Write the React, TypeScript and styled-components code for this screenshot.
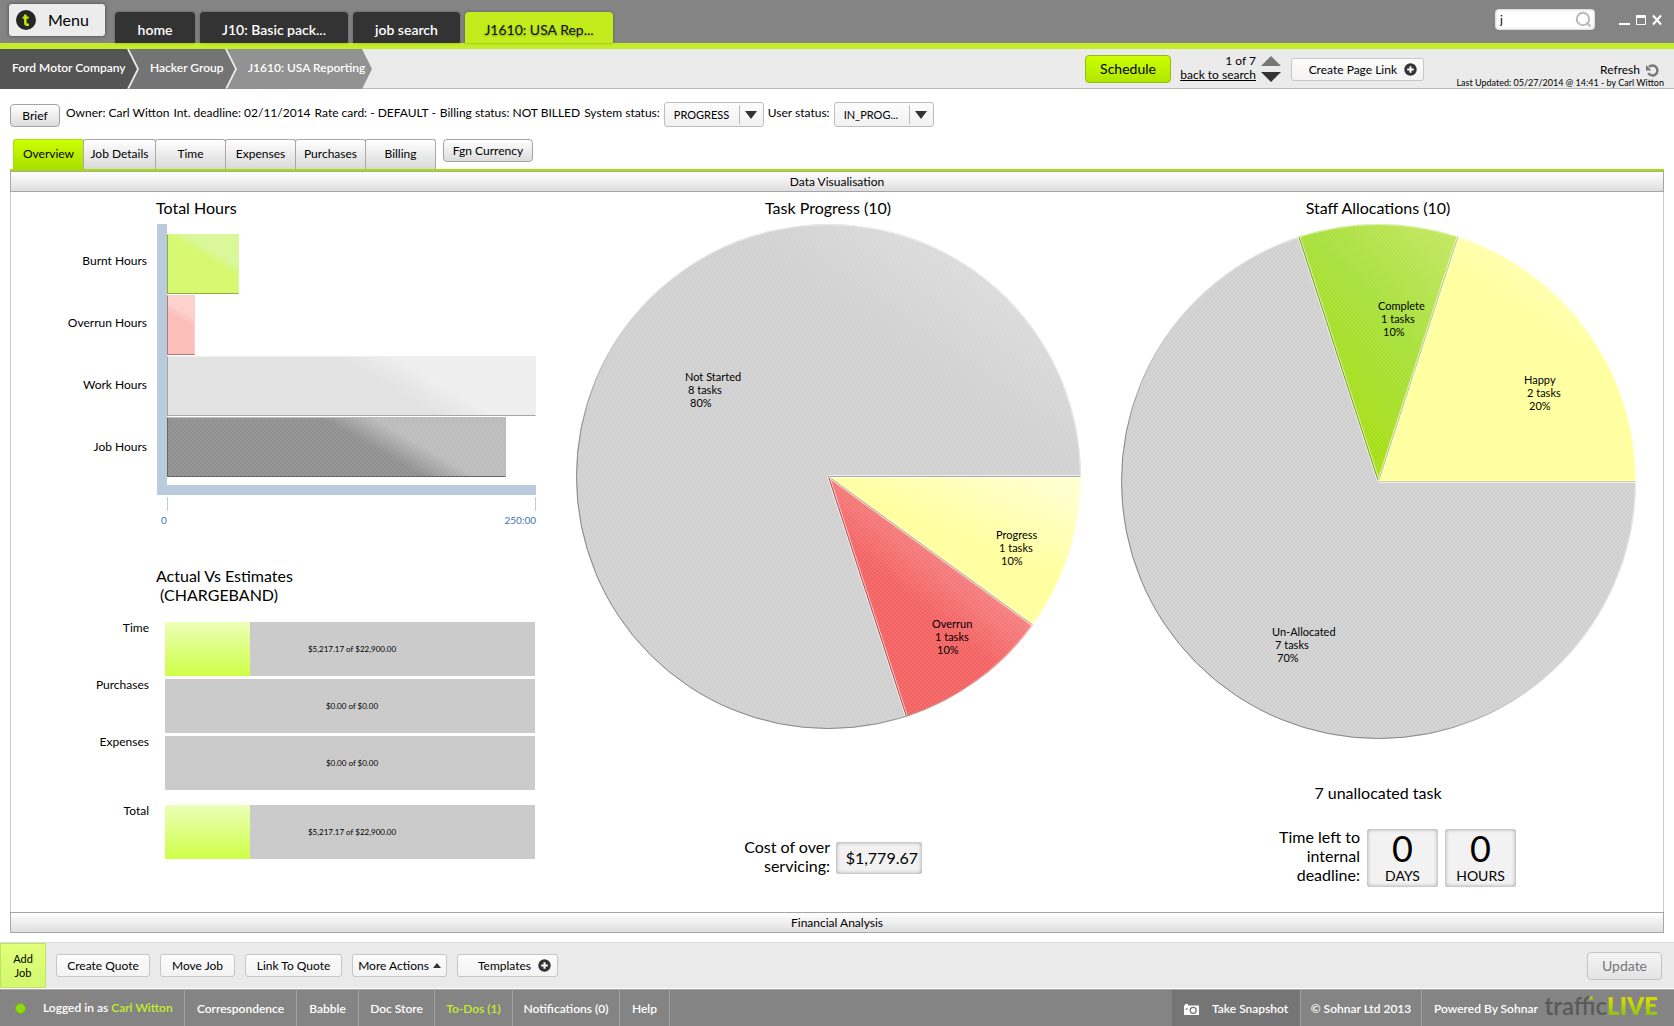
import React from 'react';
import styled, { createGlobalStyle, css } from 'styled-components';

const lime = '#c4ee28';

const GlobalStyle = createGlobalStyle`
  *, *::before, *::after { box-sizing: border-box; }
  body { margin: 0; background: #fff; color: #000; font: 12px/16px Lato, "Open Sans", sans-serif; }
  button, input, select { font: inherit; color: inherit; margin: 0; }
  button { cursor: pointer; white-space: nowrap; }
  button:disabled { cursor: default; }
  a { color: inherit; text-decoration: none; }
  h2, p, dl, dd, ul { margin: 0; padding: 0; font-weight: 400; }
  svg { display: block; }
`;

const Page = styled.div`
  min-height: 100vh;
  display: flex;
  flex-direction: column;
`;

/* ---------- top bar ---------- */

const TopBar = styled.header`
  display: flex;
  height: 49px;
  padding: 0 12px 0 9px;
  background: #848484;
  border-bottom: 6px solid ${lime};
`;

const MenuButton = styled.button`
  display: flex;
  align-items: center;
  gap: 12px;
  width: 96px;
  height: 32px;
  margin-top: 4px;
  padding: 0 7px;
  border: 0;
  border-radius: 3px;
  background: #ececec;
  box-shadow: 0 0 4px rgba(0, 0, 0, 0.45);
  font-size: 16px;
`;

const WindowTabs = styled.nav`
  display: flex;
  align-items: flex-end;
  gap: 5px;
  margin-left: 10px;
`;

const WindowTab = styled.button<{ $width: number; $active?: boolean }>`
  width: ${(p) => p.$width}px;
  height: 31px;
  padding: 4px 0 0;
  border: 0;
  border-radius: 4px 4px 0 0;
  background: ${(p) => (p.$active ? '#c2ec1c' : '#333')};
  color: ${(p) => (p.$active ? '#111' : '#fff')};
  font-size: 14px;
  font-weight: ${(p) => (p.$active ? 400 : 600)};
  text-shadow: ${(p) => (p.$active ? '0 1px 2px rgba(0,0,0,.3)' : 'none')};
  box-shadow: 0 0 3px rgba(0, 0, 0, 0.3);
`;

const SearchBox = styled.label`
  display: flex;
  align-items: center;
  width: 100px;
  height: 21px;
  margin: 9px 0 0 auto;
  padding: 0 3px 0 5px;
  border-radius: 4px;
  background: #fff;
  box-shadow: inset 0 0 3px rgba(0, 0, 0, 0.35);
`;

const SearchInput = styled.input`
  flex: 1;
  min-width: 0;
  padding: 0;
  border: 0;
  outline: 0;
  background: none;
`;

const WindowControls = styled.div`
  display: flex;
  gap: 6px;
  margin: 12px 0 0 24px;
  height: 14px;
`;

const IconButton = styled.button`
  padding: 0;
  border: 0;
  background: none;
`;

/* ---------- breadcrumb bar ---------- */

const CrumbBar = styled.div`
  display: flex;
  height: 40px;
  background: #ebebeb;
  border-bottom: 1px solid #b8b8b8;
`;

const Crumbs = styled.nav`
  display: flex;
  height: 40px;
`;

const Crumb = styled.a<{ $width: number; $tone: string; $first?: boolean }>`
  width: ${(p) => p.$width}px;
  padding-left: ${(p) => (p.$first ? 12 : 21)}px;
  margin-left: ${(p) => (p.$first ? 0 : -8)}px;
  background: ${(p) => p.$tone};
  color: #fff;
  font-weight: 600;
  line-height: 38px;
  white-space: nowrap;
  clip-path: polygon(
    0 0, calc(100% - 10px) 0, 100% 50%, calc(100% - 10px) 100%, 0 100%,
    ${(p) => (p.$first ? '0 50%' : '10px 50%')}
  );
`;

const CrumbTools = styled.div`
  display: flex;
  flex: 1;
  align-items: flex-start;
  justify-content: flex-end;
  padding-right: 10px;
`;

const ScheduleButton = styled.button`
  width: 86px;
  height: 28px;
  margin: 6px 1px 0 0;
  padding: 0;
  border: 1px solid #93bd10;
  border-radius: 4px;
  background: linear-gradient(#ccff00, #b0e600);
  font-size: 14px;
`;

const Pager = styled.div`
  width: 84px;
  margin-top: 5px;
  text-align: right;
  line-height: 14px;
  a { text-decoration: underline; }
`;

const PagerArrows = styled.div`
  display: flex;
  flex-direction: column;
  gap: 6px;
  margin: 7px 10px 0 5px;
`;

const RefreshArea = styled.div`
  width: 240px;
  margin-top: 13px;
  text-align: right;
`;

const RefreshButton = styled.button`
  display: inline-flex;
  align-items: center;
  gap: 6px;
  height: 16px;
  margin-right: 5px;
  padding: 0;
  border: 0;
  background: none;
`;

const Updated = styled.p`
  font-size: 9px;
  line-height: 10px;
`;

/* ---------- shared buttons ---------- */

const SoftButton = styled.button<{ $width: number }>`
  display: flex;
  align-items: center;
  justify-content: center;
  gap: 4px;
  width: ${(p) => p.$width}px;
  height: 23px;
  padding: 0;
  border: 1px solid #c6c6c6;
  border-radius: 3px;
  background: linear-gradient(#fcfcfc, #f3f3f3);
`;

const TemplateButton = styled(SoftButton)`
  justify-content: flex-end;
  gap: 7px;
  padding-right: 6px;
`;

const LinkButton = styled(TemplateButton)`
  margin-top: 9px;
`;

const GreyButton = styled.button<{ $width: number }>`
  width: ${(p) => p.$width}px;
  height: 23px;
  padding: 0;
  border: 1px solid #a2a2a2;
  border-radius: 4px;
  background: linear-gradient(#fff, #dcdcdc);
  line-height: 20px;
`;

/* ---------- job details ---------- */

const JobBar = styled.section`
  display: flex;
  align-items: flex-start;
  gap: 4px;
  padding: 12px 10px;
`;

const BriefSlot = styled.div`
  padding: 3px 2px 0 0;
`;

const Facts = styled.dl`
  display: flex;
  gap: 4px;
  line-height: 24px;
  white-space: nowrap;
`;

const Fact = styled.div`
  display: flex;
  gap: 3px;
`;

const StatusField = styled.label`
  display: flex;
  gap: 4px;
  line-height: 24px;
  white-space: nowrap;
`;

const SelectFrame = styled.span`
  position: relative;
  display: block;
  width: 100px;
  height: 25px;
  margin-top: 1px;
`;

const Select = styled.select`
  width: 100%;
  height: 100%;
  padding: 0 26px 0 9px;
  appearance: none;
  border: 1px solid #bdbdbd;
  border-radius: 3px;
  background: linear-gradient(#fcfcfc, #f1f1f1);
  font-size: 11px;
`;

const SelectArrow = styled.span`
  position: absolute;
  inset: 3px 1px 3px auto;
  width: 24px;
  display: grid;
  place-items: center;
  border-left: 1px solid #bdbdbd;
  pointer-events: none;
`;

const TabRow = styled.nav`
  display: flex;
  align-items: flex-start;
  margin: 0 10px;
  padding-left: 3px;
  border-bottom: 2px solid #a9df00;
`;

const JobTab = styled.button<{ $active?: boolean; $wide?: boolean }>`
  width: ${(p) => (p.$wide ? 73 : 71)}px;
  height: 30px;
  margin-right: -1px;
  padding: 0 0 2px;
  border: 1px solid #a9a9a9;
  border-bottom: 0;
  border-radius: 3px 3px 0 0;
  background: linear-gradient(#fff, #d9d9d9);
  ${(p) =>
    p.$active &&
    css`
      border-color: #a9df00;
      background: linear-gradient(#ccff00, #a9df00);
    `}
`;

const CurrencySlot = styled.div`
  margin-left: 8px;
`;

/* ---------- panel ---------- */

const Panel = styled.main`
  flex: 1;
  display: flex;
  flex-direction: column;
  margin: 0 10px 9px;
`;

const PanelBar = styled.button`
  height: 21px;
  padding: 0;
  border: 1px solid #a6a6a6;
  background: linear-gradient(#fff, #dedede);
`;

const PanelBody = styled.div`
  flex: 1;
  display: grid;
  grid-template-columns: 542fr 550fr 550fr;
  padding: 0 10px 20px 0;
  border: solid #ccc;
  border-width: 0 1px;
`;

const LeftColumn = styled.div`
  padding-right: 17px;
`;

const ChartColumn = styled.section`
  display: flex;
  flex-direction: column;
  align-items: center;
`;

const ChartTitle = styled.h2`
  padding-bottom: 1px;
  font-size: 16px;
  line-height: 31px;
`;

const SideTitle = styled(ChartTitle)`
  padding-left: 145px;
`;

const EstimateTitle = styled.h2`
  margin: 37px 0 18px;
  padding-left: 145px;
  font-size: 16px;
  line-height: 19px;
  white-space: pre-line;
`;

const HoursChart = styled.div`
  display: flex;
  gap: 10px;
`;

const HoursLabels = styled.div`
  width: 136px;
  height: 271px;
  padding-top: 6px;
  text-align: right;
  line-height: 62px;
`;

const Plot = styled.div`
  flex: 1;
  display: flex;
  flex-direction: column;
  gap: 1px;
  padding: 10px 0 8px;
  border: solid #b9cbdc;
  border-width: 0 0 10px 10px;
`;

const HourBar = styled.div<{ $from: string; $to: string; $edge: string }>`
  height: 60px;
  border: 1px solid ${(p) => p.$to};
  border-left-color: ${(p) => p.$edge};
  border-bottom-color: ${(p) => p.$edge};
  background:
    repeating-conic-gradient(rgba(255, 255, 255, 0.06) 0 25%, transparent 0 50%) 0 0 / 4px 4px,
    linear-gradient(30deg, ${(p) => p.$from} 58%, ${(p) => p.$to} 70%);
`;

const Ticks = styled.div`
  height: 14px;
  margin: 2px 0 0 156px;
  border: solid #b9cbdc;
  border-width: 0 1px;
`;

const TickLabels = styled.div`
  display: flex;
  justify-content: space-between;
  padding-left: 150px;
  color: #3e74b4;
  font-size: 10px;
  line-height: 18px;
`;

const EstimateRow = styled.div<{ $total?: boolean }>`
  display: flex;
  gap: 16px;
  margin: ${(p) => (p.$total ? 15 : 3)}px 1px 0 0;
`;

const EstimateLabel = styled.span`
  width: 138px;
  text-align: right;
  line-height: 12px;
`;

const EstimateTrack = styled.div<{ $fill: number }>`
  flex: 1;
  display: grid;
  place-items: center;
  height: 54px;
  padding-left: 4px;
  background:
    linear-gradient(#ecffb8, #ceff46) 0 0 / ${(p) => p.$fill}% 100% no-repeat,
    #cbcbcb;
  font-size: 8px;
`;

const PieSvg = styled.svg<{ $size: number }>`
  width: ${(p) => p.$size}px;
  max-width: 100%;
  height: auto;
  font-size: 11px;
`;

const CostRow = styled.div`
  display: flex;
  align-items: flex-start;
  gap: 6px;
  margin-top: 108px;
  padding-right: 4px;
`;

const SideNote = styled.p<{ $width: number }>`
  width: ${(p) => p.$width}px;
  text-align: right;
  font-size: 16px;
  line-height: 19px;
`;

const ValueBox = styled.output`
  width: 86px;
  margin-top: 5px;
  padding-right: 4px;
  border-radius: 3px;
  background: #f2f2f2;
  box-shadow: inset 0 0 4px rgba(0, 0, 0, 0.4);
  font-size: 16px;
  line-height: 32px;
  text-align: right;
`;

const Unallocated = styled.p`
  margin-top: 44px;
  font-size: 16px;
  line-height: 20px;
`;

const DeadlineRow = styled.div`
  display: flex;
  align-items: flex-start;
  gap: 7px;
  margin-top: 24px;
  padding-left: 30px;
`;

const CountBox = styled.div`
  display: flex;
  flex-direction: column;
  align-items: center;
  width: 71px;
  height: 58px;
  margin-top: 2px;
  border-radius: 3px;
  background: #f2f2f2;
  box-shadow: inset 0 0 4px rgba(0, 0, 0, 0.4);
  font-size: 14px;
  line-height: 18px;
`;

const Count = styled.span`
  font-size: 36px;
  line-height: 38px;
`;

/* ---------- bottom bars ---------- */

const ActionBar = styled.div`
  display: flex;
  align-items: center;
  gap: 10px;
  height: 47px;
  padding-right: 12px;
  background: #eaeaea;
  border-top: 1px solid #dcdcdc;
  border-bottom: 1px solid #fff;
`;

const AddJob = styled.button`
  align-self: stretch;
  width: 46px;
  padding: 0;
  border: 1px solid #bfe35c;
  background: linear-gradient(#e2ff7a, #d3f870);
  font-size: 11px;
  line-height: 14px;
  white-space: normal;
`;

const UpdateButton = styled.button`
  width: 75px;
  height: 28px;
  margin-left: auto;
  padding: 0;
  border: 1px solid #c4c4c4;
  border-radius: 4px;
  background: linear-gradient(#f4f4f4, #e4e4e4);
  color: #777;
  font-size: 14px;
`;

const Footer = styled.footer`
  display: flex;
  height: 37px;
  background: #848484;
  border-top: 1px solid #a8a8a8;
  color: #fff;
  font-weight: 600;
  line-height: 38px;
  white-space: nowrap;
`;

const FooterItem = styled.a<{ $width: number; $lime?: boolean }>`
  width: ${(p) => p.$width}px;
  border-right: 1px solid #a2a2a2;
  text-align: center;
  color: ${(p) => (p.$lime ? lime : '#fff')};
`;

const LoginItem = styled.div`
  display: flex;
  align-items: center;
  width: 185px;
  padding-left: 15px;
  border-right: 1px solid #a2a2a2;
`;

const LoginText = styled.span`
  margin-left: 17px;
  a { color: ${lime}; }
`;

const Snapshot = styled.button`
  display: flex;
  align-items: center;
  gap: 13px;
  width: 129px;
  margin-left: auto;
  padding: 2px 0 0 12px;
  border: 0;
  border-right: 1px solid #a2a2a2;
  background: #757575;
  color: #fff;
  font-weight: 600;
`;

const Brand = styled.div`
  display: flex;
  justify-content: space-between;
  width: 252px;
  padding: 0 16px 0 12px;
`;

const LogoText = styled.span`
  position: relative;
  display: flex;
  color: #5a5a5a;
  font-size: 24px;
  line-height: 32px;
  b {
    font-weight: 800;
    color: transparent;
    background: linear-gradient(#d0da00 30%, #86bc1c 75%);
    background-clip: text;
  }
`;

const LogoDot = styled.i`
  position: absolute;
  left: 44px;
  top: 6px;
  width: 4px;
  height: 4px;
  border-radius: 50%;
  background: #9ccc1c;
`;

/* ---------- icons ---------- */

const PlusIcon = () => (
  <svg width="13" height="13" viewBox="0 0 13 13" aria-hidden="true">
    <circle cx="6.5" cy="6.5" r="6.2" fill="#333" />
    <path d="M6.5 3.2v6.6M3.2 6.5h6.6" stroke="#fff" strokeWidth="2" />
  </svg>
);

const Triangle = ({ up, w, h, color }: { up?: boolean; w: number; h: number; color: string }) => (
  <svg width={w} height={h} viewBox={`0 0 ${w} ${h}`} aria-hidden="true">
    <path d={up ? `M0 ${h}L${w / 2} 0L${w} ${h}z` : `M0 0H${w}L${w / 2} ${h}z`} fill={color} />
  </svg>
);

const MenuIcon = () => (
  <svg width="20" height="20" viewBox="0 0 20 20" aria-hidden="true">
    <circle cx="10" cy="10" r="10" fill="#262626" />
    <path d="M9.3 4.5v8.2q0 2 2 2h1.6M6.6 7.6h6" fill="none" stroke="#c4f000" strokeWidth="2.4" />
  </svg>
);

const SearchIcon = () => (
  <svg width="17" height="17" viewBox="0 0 17 17" fill="none" stroke="#b9b9b9" strokeWidth="2" aria-hidden="true">
    <circle cx="8" cy="8" r="6.2" />
    <path d="M11.5 11.5L15.5 15.5" />
  </svg>
);

const RefreshIcon = () => (
  <svg width="13" height="13" viewBox="0 0 13 13" aria-hidden="true">
    <path d="M2.9 2.9A5 5 0 1 1 2.2 9.2" fill="none" stroke="#777" strokeWidth="2.4" />
    <path d="M0 6.4V1l5.4 5.4z" fill="#777" />
  </svg>
);

const CameraIcon = () => (
  <svg width="15" height="11" viewBox="0 0 15 11" aria-hidden="true">
    <path d="M0 1.6h1V0h3v1.6h11V11H0z" fill="#fff" />
    <circle cx="9.2" cy="6.3" r="3" fill="none" stroke="#757575" strokeWidth="1.3" />
    <path d="M1.4 5h2.4" stroke="#757575" strokeWidth="1.2" />
  </svg>
);

const StatusDot = () => (
  <svg width="11" height="13" viewBox="0 0 11 13" aria-hidden="true">
    <circle cx="5.5" cy="6.5" r="5" fill="#8ddb0e" stroke="#75b010" />
  </svg>
);

/* ---------- pie chart ---------- */

type Slice = {
  name: string;
  tasks: number;
  share: number;
  light: string;
  base: string;
  deep?: string;
  edge: string;
  /* where the highlight ends and where the base colour begins */
  glow: [number, number];
  x: number;
  y: number;
};

const point = (r: number, turn: number) => {
  const a = turn * Math.PI * 2;
  return `${r + Math.cos(a) * r} ${r + Math.sin(a) * r}`;
};

const Pie = ({ id, size, slices, label }: { id: string; size: number; slices: Slice[]; label: string }) => {
  const r = size / 2;
  let turn = 0;
  return (
    <PieSvg $size={size} viewBox={`0 0 ${size} ${size}`} role="img" aria-label={label}>
      <defs>
        <pattern id={`${id}-weave`} width="4" height="4" patternUnits="userSpaceOnUse">
          <path d="M0 0h2v2H0zM2 2h2v2H2z" fill="#fff" fillOpacity="0.07" />
        </pattern>
        <linearGradient id={`${id}-rim`} x1="1" y1="0" x2="0" y2="1">
          <stop offset="0.45" stopColor="#fff" stopOpacity="0.5" />
          <stop offset="0.7" stopColor="#888" />
        </linearGradient>
        {slices.map((s, i) => (
          <linearGradient key={s.name} id={`${id}-${i}`} x1="1" y1="0" x2="0.3" y2="1">
            <stop offset={s.glow[0]} stopColor={s.light} />
            <stop offset={s.glow[1]} stopColor={s.base} />
            <stop offset="1" stopColor={s.deep ?? s.base} />
          </linearGradient>
        ))}
      </defs>
      {slices.map((s, i) => {
        const start = turn;
        turn += s.share / 100;
        const d = `M${r} ${r}L${point(r, start)}A${r} ${r} 0 ${s.share > 50 ? 1 : 0} 1 ${point(r, turn)}z`;
        return <path key={s.name} d={d} fill={`url(#${id}-${i})`} />;
      })}
      {slices.map((s, i) => {
        const end = slices.slice(0, i + 1).reduce((sum, x) => sum + x.share, 0) / 100;
        const d = `M${r} ${r}L${point(r, end)}`;
        return (
          <g key={s.name}>
            <path d={d} stroke="#fff" strokeWidth="3" strokeOpacity="0.6" />
            <path d={d} stroke={s.edge} />
          </g>
        );
      })}
      <circle cx={r} cy={r} r={r - 0.5} fill={`url(#${id}-weave)`} stroke={`url(#${id}-rim)`} />
      {slices.map((s) => (
        <text key={s.name} x={s.x} y={s.y}>
          <tspan>{s.name}</tspan>
          <tspan x={s.x + 3} dy="13">{s.tasks} tasks</tspan>
          <tspan x={s.x + 5} dy="13">{s.share}%</tspan>
        </text>
      ))}
    </PieSvg>
  );
};

const progressSlices: Slice[] = [
  { name: 'Progress', tasks: 1, share: 10, light: '#ffffcc', base: '#ffff9e', edge: '#b3b36a', glow: [0.1, 0.5], x: 420, y: 315 },
  { name: 'Overrun', tasks: 1, share: 10, light: '#f58484', base: '#f46363', edge: '#a84444', glow: [0.4, 0.62], x: 356, y: 404 },
  { name: 'Not Started', tasks: 8, share: 80, light: '#e2e2e2', base: '#d1d1d1', edge: '#a8a8a8', glow: [0.05, 0.33], x: 109, y: 157 },
];

const staffSlices: Slice[] = [
  { name: 'Un-Allocated', tasks: 7, share: 70, light: '#d1d1d1', base: '#d1d1d1', edge: '#6f9a10', glow: [0, 1], x: 151, y: 412 },
  { name: 'Complete', tasks: 1, share: 10, light: '#c6e864', base: '#a8e03c', deep: '#a6df08', edge: '#bcc878', glow: [0, 0.45], x: 257, y: 86 },
  { name: 'Happy', tasks: 2, share: 20, light: '#ffffc4', base: '#ffff9e', edge: '#cfcf80', glow: [0.1, 0.42], x: 403, y: 160 },
];

/* ---------- data ---------- */

const hourBars = [
  { label: 'Burnt Hours', width: 19.4, from: '#d6f86c', to: '#d8f898', edge: '#8fac40' },
  { label: 'Overrun Hours', width: 7.6, from: '#fcbdb7', to: '#fcd0cb', edge: '#a87a78' },
  { label: 'Work Hours', width: 100, from: '#e2e2e2', to: '#eeeeee', edge: '#a6a6a6' },
  { label: 'Job Hours', width: 91.8, from: '#909090', to: '#bcbcbc', edge: '#666' },
];

const estimates = [
  { label: 'Time', fill: 23, text: '$5,217.17 of $22,900.00' },
  { label: 'Purchases', fill: 0, text: '$0.00 of $0.00' },
  { label: 'Expenses', fill: 0, text: '$0.00 of $0.00' },
  { label: 'Total', fill: 23, text: '$5,217.17 of $22,900.00', total: true },
];

const facts = [
  { name: 'Owner:', value: 'Carl Witton' },
  { name: 'Int. deadline:', value: '02/11/2014' },
  { name: 'Rate card:', value: '- DEFAULT -' },
  { name: 'Billing status:', value: 'NOT BILLED' },
];

const StatusSelect = ({ label, value }: { label: string; value: string }) => (
  <StatusField>
    {label}
    <SelectFrame>
      <Select defaultValue={value}>
        <option>{value}</option>
      </Select>
      <SelectArrow>
        <Triangle w={12} h={8} color="#333" />
      </SelectArrow>
    </SelectFrame>
  </StatusField>
);

export default function App() {
  return (
    <Page>
      <GlobalStyle />
      <TopBar>
        <MenuButton>
          <MenuIcon />
          Menu
        </MenuButton>
        <WindowTabs>
          <WindowTab $width={80}>home</WindowTab>
          <WindowTab $width={148}>J10: Basic pack...</WindowTab>
          <WindowTab $width={107}>job search</WindowTab>
          <WindowTab $width={148} $active>J1610: USA Rep...</WindowTab>
        </WindowTabs>
        <SearchBox>
          <SearchInput defaultValue="j" aria-label="Search" />
          <SearchIcon />
        </SearchBox>
        <WindowControls>
          <IconButton aria-label="Minimise">
            <svg width="11" height="14"><path d="M0 12h11" stroke="#fff" strokeWidth="2" /></svg>
          </IconButton>
          <IconButton aria-label="Maximise">
            <svg width="10" height="14"><path d="M.5 3.5h9v9h-9zM0 4.5h10M0 5.5h10" fill="none" stroke="#fff" /></svg>
          </IconButton>
          <IconButton aria-label="Close">
            <svg width="10" height="14"><path d="M1 3.5l8 9M9 3.5l-8 9" stroke="#fff" strokeWidth="2" /></svg>
          </IconButton>
        </WindowControls>
      </TopBar>

      <CrumbBar>
        <Crumbs>
          <Crumb href="#" $width={137} $tone="#555" $first>Ford Motor Company</Crumb>
          <Crumb href="#" $width={106} $tone="#747474">Hacker Group</Crumb>
          <Crumb href="#" $width={145} $tone="#929292">J1610: USA Reporting</Crumb>
        </Crumbs>
        <CrumbTools>
          <ScheduleButton>Schedule</ScheduleButton>
          <Pager>
            1 of 7<br />
            <a href="#">back to search</a>
          </Pager>
          <PagerArrows>
            <IconButton aria-label="Previous"><Triangle up w={20} h={10} color="#777" /></IconButton>
            <IconButton aria-label="Next"><Triangle w={20} h={10} color="#333" /></IconButton>
          </PagerArrows>
          <LinkButton $width={133}>Create Page Link <PlusIcon /></LinkButton>
          <RefreshArea>
            <RefreshButton>Refresh <RefreshIcon /></RefreshButton>
            <Updated>Last Updated: 05/27/2014 @ 14:41 - by Carl Witton</Updated>
          </RefreshArea>
        </CrumbTools>
      </CrumbBar>

      <JobBar>
        <BriefSlot><GreyButton $width={50}>Brief</GreyButton></BriefSlot>
        <Facts>
          {facts.map((f) => (
            <Fact key={f.name}>
              <dt>{f.name}</dt>
              <dd>{f.value}</dd>
            </Fact>
          ))}
        </Facts>
        <StatusSelect label="System status:" value="PROGRESS" />
        <StatusSelect label="User status:" value="IN_PROG..." />
      </JobBar>

      <TabRow>
        <JobTab $active>Overview</JobTab>
        <JobTab $wide>Job Details</JobTab>
        <JobTab>Time</JobTab>
        <JobTab>Expenses</JobTab>
        <JobTab>Purchases</JobTab>
        <JobTab>Billing</JobTab>
        <CurrencySlot><GreyButton $width={90}>Fgn Currency</GreyButton></CurrencySlot>
      </TabRow>

      <Panel>
        <PanelBar>Data Visualisation</PanelBar>
        <PanelBody>
          <LeftColumn>
            <SideTitle>Total Hours</SideTitle>
            <HoursChart>
              <HoursLabels>
                {hourBars.map((b) => <div key={b.label}>{b.label}</div>)}
              </HoursLabels>
              <Plot>
                {hourBars.map((b) => (
                  <HourBar key={b.label} $from={b.from} $to={b.to} $edge={b.edge} style={{ width: `${b.width}%` }} />
                ))}
              </Plot>
            </HoursChart>
            <Ticks />
            <TickLabels><span>0</span><span>250:00</span></TickLabels>
            <EstimateTitle>Actual Vs Estimates{'\n\u00a0'}(CHARGEBAND)</EstimateTitle>
            {estimates.map((e) => (
              <EstimateRow key={e.label} $total={e.total}>
                <EstimateLabel>{e.label}</EstimateLabel>
                <EstimateTrack $fill={e.fill}>{e.text}</EstimateTrack>
              </EstimateRow>
            ))}
          </LeftColumn>

          <ChartColumn>
            <ChartTitle>Task Progress (10)</ChartTitle>
            <Pie id="progress" size={505} slices={progressSlices} label="Task progress" />
            <CostRow>
              <SideNote $width={100}>Cost of over servicing:</SideNote>
              <ValueBox>$1,779.67</ValueBox>
            </CostRow>
          </ChartColumn>

          <ChartColumn>
            <ChartTitle>Staff Allocations (10)</ChartTitle>
            <Pie id="staff" size={515} slices={staffSlices} label="Staff allocations" />
            <Unallocated>7 unallocated task</Unallocated>
            <DeadlineRow>
              <SideNote $width={90}>Time left to internal deadline:</SideNote>
              <CountBox><Count>0</Count>DAYS</CountBox>
              <CountBox><Count>0</Count>HOURS</CountBox>
            </DeadlineRow>
          </ChartColumn>
        </PanelBody>
        <PanelBar>Financial Analysis</PanelBar>
      </Panel>

      <ActionBar>
        <AddJob>Add<br />Job</AddJob>
        <SoftButton $width={94}>Create Quote</SoftButton>
        <SoftButton $width={75}>Move Job</SoftButton>
        <SoftButton $width={97}>Link To Quote</SoftButton>
        <SoftButton $width={95}>More Actions <Triangle up w={8} h={5} color="#333" /></SoftButton>
        <TemplateButton $width={101}>Templates <PlusIcon /></TemplateButton>
        <UpdateButton disabled>Update</UpdateButton>
      </ActionBar>

      <Footer>
        <LoginItem>
          <StatusDot />
          <LoginText>Logged in as <a href="#">Carl Witton</a></LoginText>
        </LoginItem>
        <FooterItem href="#" $width={112}>Correspondence</FooterItem>
        <FooterItem href="#" $width={62}>Babble</FooterItem>
        <FooterItem href="#" $width={76}>Doc Store</FooterItem>
        <FooterItem href="#" $width={78} $lime>To-Dos (1)</FooterItem>
        <FooterItem href="#" $width={107}>Notifications (0)</FooterItem>
        <FooterItem href="#" $width={50}>Help</FooterItem>
        <Snapshot><CameraIcon /> Take Snapshot</Snapshot>
        <FooterItem href="#" $width={121}>© Sohnar Ltd 2013</FooterItem>
        <Brand>
          Powered By Sohnar
          <LogoText>traffic<b>LIVE</b><LogoDot /></LogoText>
        </Brand>
      </Footer>
    </Page>
  );
}
